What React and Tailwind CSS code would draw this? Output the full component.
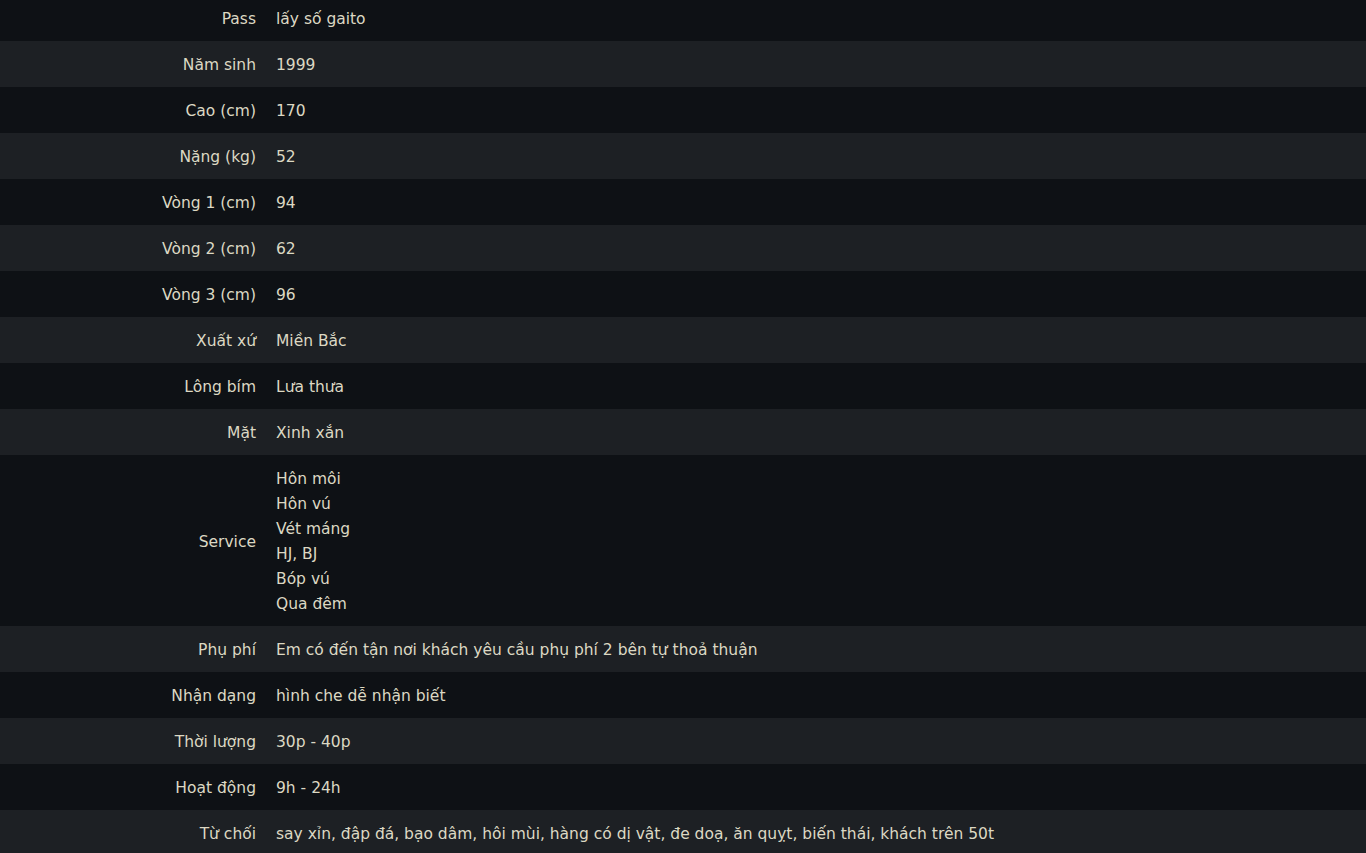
import React from "react";

const rows = [
  ["Pass", ["lấy số gaito"]],
  ["Năm sinh", ["1999"]],
  ["Cao (cm)", ["170"]],
  ["Nặng (kg)", ["52"]],
  ["Vòng 1 (cm)", ["94"]],
  ["Vòng 2 (cm)", ["62"]],
  ["Vòng 3 (cm)", ["96"]],
  ["Xuất xứ", ["Miền Bắc"]],
  ["Lông bím", ["Lưa thưa"]],
  ["Mặt", ["Xinh xắn"]],
  ["Service", ["Hôn môi", "Hôn vú", "Vét máng", "HJ, BJ", "Bóp vú", "Qua đêm"]],
  ["Phụ phí", ["Em có đến tận nơi khách yêu cầu phụ phí 2 bên tự thoả thuận"]],
  ["Nhận dạng", ["hình che dễ nhận biết"]],
  ["Thời lượng", ["30p - 40p"]],
  ["Hoạt động", ["9h - 24h"]],
  ["Từ chối", ["say xỉn, đập đá, bạo dâm, hôi mùi, hàng có dị vật, đe doạ, ăn quỵt, biến thái, khách trên 50t"]],
];

export default function App() {
  return (
    <div
      className="w-[1366px] h-[853px] overflow-hidden bg-[#0e1115] text-[#dcd8c3] text-[15.5px] leading-[25px]"
      style={{ fontFamily: '"DejaVu Sans", "Noto Sans", sans-serif' }}
    >
      <div className="border-t border-[#2a2d31]">
        <div className="-mt-[6px]">
          {rows.map(([label, values], i) => (
            <div
              key={label}
              className={`grid grid-cols-[266px_1fr] items-center pt-[12px] pb-[9px] ${
                i % 2 === 0 ? "bg-[#0e1115]" : "bg-[#1d2024]"
              }`}
            >
              <div className="text-right pr-[10px]">{label}</div>
              <div className="pl-[10px]">
                {values.map((v) => (
                  <div key={v}>{v}</div>
                ))}
              </div>
            </div>
          ))}
        </div>
      </div>
    </div>
  );
}
